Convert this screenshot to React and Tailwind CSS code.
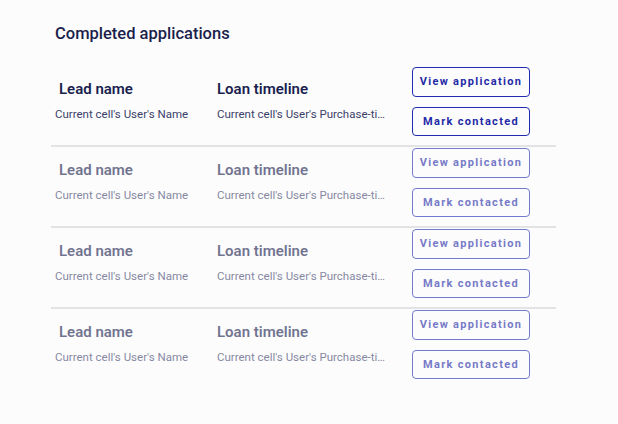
import React from "react";

const rows = [0, 1, 2, 3];

const Row = ({ faded, first }) => (
    <div className={`${first ? "" : "border-t-2 border-[#e3e3e6] pt-[1px]"} pb-[9px] pl-1`}>
        <div className={`flex ${faded ? "opacity-[0.62]" : ""}`}>
            <div className="w-[162px] pt-[12px]">
                <div className="pl-1 text-[15px] leading-[20px] font-semibold text-[#1b1f4e]">Lead name</div>
                <div className="mt-[8px] text-[11.5px] leading-[15px] text-[#3b3f68]">Current cell's User's Name</div>
            </div>
            <div className="w-[195px] pt-[12px]">
                <div className="text-[15px] leading-[20px] font-semibold text-[#1b1f4e]">Loan timeline</div>
                <div className="mt-[8px] w-[177px] truncate text-[11.5px] leading-[15px] text-[#3b3f68]">
                    Current cell's User's Purchase-timeline
                </div>
            </div>
            <div className="flex flex-col gap-[10px]">
                <button className="w-[118px] h-[30px] pt-[1px] rounded-[4px] border border-[#1f2bb0] text-[11px] font-bold tracking-[0.12em] text-[#1f2aa6]">
                    View application
                </button>
                <button className="w-[118px] h-[29px] pt-[1px] rounded-[4px] border border-[#1f2bb0] text-[11px] font-bold tracking-[0.12em] text-[#1f2aa6]">
                    Mark contacted
                </button>
            </div>
        </div>
    </div>
);

export default function App() {
    return (
        <div className="min-h-screen bg-[#fcfcfd] font-['Roboto',sans-serif]">
            <div className="ml-[51px] w-[505px] pt-[23px]">
                <h2 className="pl-1 text-[16.5px] leading-[22px] font-medium text-[#1b1f4b]">Completed applications</h2>
                <div className="mt-[22px]">
                    {rows.map((r) => (
                        <Row key={r} first={r === 0} faded={r > 0} />
                    ))}
                </div>
            </div>
        </div>
    );
}
